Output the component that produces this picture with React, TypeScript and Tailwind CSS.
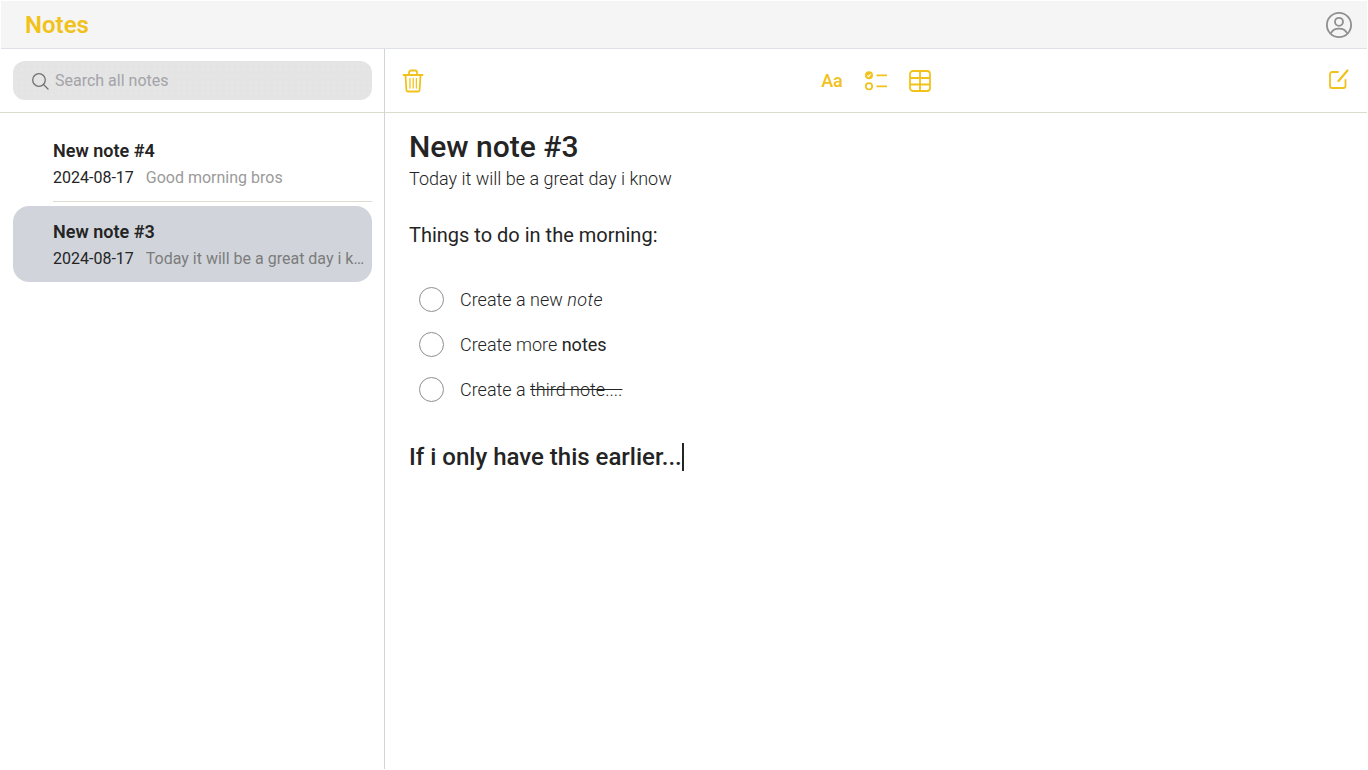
import React from "react";

const Y = "#f1c21b";

function Trash() {
  return (
    <svg width="24" height="24" viewBox="0 0 24 24" fill="none" stroke={Y} strokeWidth="1.800" strokeLinecap="round" strokeLinejoin="round">
      <path d="M2.500 6h19" />
      <path d="M8 6V3.500A2 2 0 0 1 10 1.500h4A2 2 0 0 1 16 3.500V6" />
      <path d="M4.500 6l.9 15a1.500 1.500 0 0 0 1.500 1.500h10.200a1.500 1.500 0 0 0 1.500-1.500l.9-15" />
      <path d="M9 9.500v9.500M12.200 9.500v9.500M15.400 9.500v9.500" strokeWidth="1.300" />
    </svg>
  );
}

function ListCheck() {
  return (
    <svg width="24" height="24" viewBox="0 0 24 24" fill="none">
      <circle cx="5" cy="6.300" r="4" fill={Y} />
      <path d="M3.300 6.300l1.300 1.400 2.300-2.700" stroke="#fff" strokeWidth="1.100" fill="none" />
      <circle cx="5" cy="17.300" r="3.200" stroke={Y} strokeWidth="1.700" />
      <path d="M12.500 6.300H23M12.500 17.300H23" stroke={Y} strokeWidth="1.700" />
    </svg>
  );
}

function TableIcon() {
  return (
    <svg width="24" height="24" viewBox="0 0 24 24" fill="none" stroke={Y} strokeWidth="1.800">
      <rect x="2" y="2" width="20" height="20" rx="3" />
      <path d="M2 9h20M2 15.500h20M12 2v20" />
    </svg>
  );
}

function Compose() {
  return (
    <svg width="24" height="24" viewBox="0 0 24 24" fill="none" stroke={Y} strokeWidth="1.800" strokeLinecap="round" strokeLinejoin="round">
      <path d="M12 3H6a2 2 0 0 0-2 2v12a2 2 0 0 0 2 2h11.500a2 2 0 0 0 2-2v-6" />
      <path d="M12.500 12L21.500 1.500" strokeWidth="2.200" />
    </svg>
  );
}

function User() {
  return (
    <svg width="28" height="28" viewBox="0 0 28 28" fill="none" stroke="#8f8f8f" strokeWidth="1.800">
      <circle cx="14" cy="14" r="12.100" />
      <circle cx="14" cy="10.800" r="4" />
      <path d="M5.800 22.500c1.500-3.300 4.500-4.800 8.200-4.800s6.700 1.500 8.200 4.800" />
    </svg>
  );
}

function Search() {
  return (
    <svg width="20" height="20" viewBox="0 0 20 20" fill="none" stroke="#6f6f6f" strokeWidth="1.300" strokeLinecap="round">
      <circle cx="9" cy="9" r="6.300" />
      <path d="M13.600 13.600L18 18" />
    </svg>
  );
}

function NoteRow({ title, preview, active }: { title: string; preview: string; active?: boolean }) {
  return (
    <div className={`h-[76px] rounded-2xl pl-10 pr-[7px] pt-[15px] ${active ? "bg-[#d1d5db]" : ""}`}>
      <div className="text-lg leading-[22px] font-semibold text-[#242424]">{title}</div>
      <div className="mt-[5px] flex gap-3 text-base leading-[22px]">
        <span className="shrink-0 text-[#242424]">2024-08-17</span>
        <span className={`truncate ${active ? "text-[#7c7c7c]" : "text-[#9a9a9a]"}`}>{preview}</span>
      </div>
    </div>
  );
}

function Todo({ children }: { children: React.ReactNode }) {
  return (
    <div className="flex h-[45px] items-center gap-4">
      <span className="ml-[10px] size-[25px] shrink-0 rounded-full border border-[#8f8f8f]" />
      <div className="pt-px text-lg font-light text-[#242424]">{children}</div>
    </div>
  );
}

export default function App() {
  return (
    <div className="flex h-[769px] w-[1367px] flex-col bg-white font-['Roboto',sans-serif] text-[#242424]">
      <header className="ml-px mt-px flex h-[48px] shrink-0 items-center justify-between border-b border-[#dfe1e8] bg-[#f5f5f5] pl-6 pr-[14px]">
        <h1 className="text-2xl font-semibold text-[#f1c21b]">Notes</h1>
        <User />
      </header>
      <div className="flex min-h-0 flex-1">
        <aside className="flex w-[385px] shrink-0 flex-col border-r border-[#d1d5db]">
          <div className="flex h-[64px] shrink-0 items-center border-b border-[#dddbcd] pl-[13px] pr-3">
            <div className="flex h-[39px] w-[359px] items-center gap-[5px] rounded-xl bg-[#e4e4e4] bg-[radial-gradient(#eaeaea_0.6px,transparent_0.8px)] bg-size-[6px_6px] pl-[17px]">
              <Search />
              <span className="text-base text-[#a3a3a8]">Search all notes</span>
            </div>
          </div>
          <div className="pl-[13px] pr-3 pt-3">
            <NoteRow title="New note #4" preview="Good morning bros" />
            <div className="mb-1 ml-10 h-px bg-[#dddbcd]" />
            <NoteRow title="New note #3" preview="Today it will be a great day i know" active />
          </div>
        </aside>
        <main className="flex min-w-0 flex-1 flex-col">
          <div className="flex h-[64px] shrink-0 items-center justify-between border-b border-[#dddbcd] pl-4 pr-[17px]">
            <Trash />
            <div className="flex items-center gap-5">
              <span className="w-[24px] pl-px text-center text-lg font-medium text-[#f1c21b]">Aa</span>
              <ListCheck />
              <TableIcon />
            </div>
            <Compose />
          </div>
          <article className="pl-6 pt-[14px]">
            <h2 className="text-[30px] leading-[40px] font-medium text-[#242424]">New note #3</h2>
            <p className="text-lg leading-[24px] font-light">Today it will be a great day i know</p>
            <p className="mt-[30px] text-xl leading-[28px]">Things to do in the morning:</p>
            <div className="mt-[28px]">
              <Todo>Create a new <em className="tracking-[0.4px]">note</em></Todo>
              <Todo>Create more <span className="font-normal">notes</span></Todo>
              <Todo>Create a <span className="line-through">third note....</span></Todo>
            </div>
            <p className="mt-[29px] flex h-[32px] items-center text-2xl font-medium">
              If i only have this earlier...
              <span className="h-[28px] w-[2px] bg-[#242424]" />
            </p>
          </article>
        </main>
      </div>
    </div>
  );
}
